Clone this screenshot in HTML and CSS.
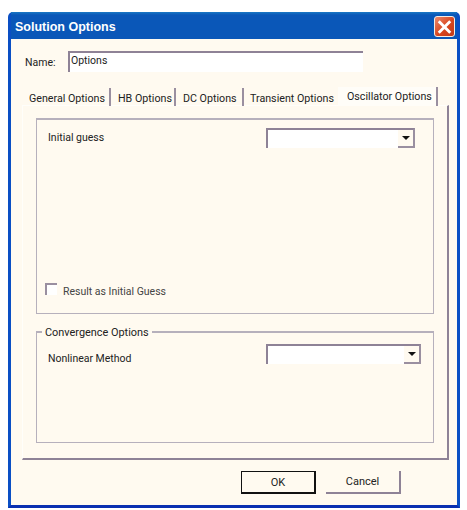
FILE: index.html
```html
<!DOCTYPE html>
<html lang="en">
  <head>
    <meta charset="UTF-8" />
    <title>Solution Options</title>
    <link rel="stylesheet" href="styles.css">
  </head>
  <body>
    <main class="window">
      <header class="titlebar">
        <h1>Solution Options</h1>
        <button class="close" aria-label="Close">
          <svg viewBox="0 0 20 20" width="20" height="20">
            <path d="M5 5 L15 15 M15 5 L5 15" stroke="#fff" stroke-width="3" stroke-linecap="square" fill="none" />
          </svg>
        </button>
      </header>
      <section class="client">
        <div class="name-row">
          <label>Name:</label>
          <div class="name-input">Options</div>
        </div>
        <nav class="tabs">
          <div class="tab tab-general">General Options</div>
          <div class="tab tab-hb">HB Options</div>
          <div class="tab tab-dc">DC Options</div>
          <div class="tab tab-transient">Transient Options</div>
          <div class="tab tab-active">Oscillator Options</div>
        </nav>
        <section class="pane">
          <div class="group group-guess">
            <div class="field-row">
              <span>Initial guess</span>
              <div class="combo combo-guess"><div class="combo-btn"><i class="arrow"></i></div></div>
            </div>
            <label class="check-row">
              <span class="check"></span>
              <span class="check-text">Result as Initial Guess</span>
            </label>
          </div>
          <fieldset class="group group-conv">
            <legend>Convergence Options</legend>
            <div class="field-row">
              <span>Nonlinear Method</span>
              <div class="combo combo-method"><div class="combo-btn"><i class="arrow"></i></div></div>
            </div>
          </fieldset>
        </section>
        <footer class="buttons">
          <button class="btn btn-default">OK</button>
          <button class="btn">Cancel</button>
        </footer>
      </section>
    </main>
  </body>
</html>
```

FILE: styles.css
```css
* {
  box-sizing: border-box;
  padding: 0;
  margin: 0;
  font-family: Roboto, "Liberation Sans", sans-serif;
}

body {
  background-color: #fff;
  padding: 12px 7px 2px 8px;
  font-size: 10.5px;
  color: #222;
}

.window {
  width: 452px;
  height: 496px;
  display: flex;
  flex-direction: column;
  border-radius: 5px 5px 0 0;
  background-color: #0a52bd;
  border: 3px solid #0a4fc4;
  border-top: none;
  border-bottom-color: #0a2fb0;
}

.titlebar {
  height: 27px;
  display: flex;
  align-items: center;
  justify-content: space-between;
  padding: 2px 2px 0 4px;
  background: linear-gradient(#1a78c4 0, #0a57b8 3px, #0a57b8 100%);
}

.titlebar h1 {
  font-family: "Liberation Sans", sans-serif;
  font-size: 12.5px;
  color: #fff;
}

.close {
  width: 21px;
  height: 21px;
  display: flex;
  align-items: center;
  justify-content: center;
  border: 1px solid #f4ece4;
  border-radius: 3px;
  background: linear-gradient(135deg, #ee8a6c, #d8461e 55%, #c23a18);
}

.client {
  flex: 1;
  background-color: #fffaf0;
  padding: 12px 11px 0 11px;
}

.name-row {
  display: flex;
  align-items: center;
  height: 21px;
}

.name-row label {
  flex: none;
  width: 46px;
  padding-left: 3px;
  margin-top: 1px;
}

.name-input {
  width: 295px;
  height: 21px;
  background-color: #fff;
  border-top: 2px solid #8e8296;
  border-left: 2px solid #8e8296;
  padding: 1px 0 0 1px;
  line-height: 14px;
}

.tabs {
  display: flex;
  height: 19px;
  margin-top: 15px;
  line-height: 21px;
  font-size: 10.7px;
}

.tab {
  border-right: 2px solid #9a8fa0;
  padding-left: 7px;
  white-space: nowrap;
  margin-top: 1px;
}

.tab-general { width: 89px; }
.tab-hb { width: 65px; }
.tab-dc { width: 68px; }
.tab-transient {
  width: 94px;
  padding-left: 6px;
  border-right: none;
}

.tab-active {
  width: 100px;
  margin-top: 0;
  padding-left: 9px;
  line-height: 19px;
  background-color: #fffdf8;
}

.pane {
  width: 427px;
  height: 355px;
  margin-top: -1px;
  border-right: 2px solid #8e8296;
  border-bottom: 2px solid #8e8296;
  border-left: 1px solid #fffefa;
  border-top: 1px solid #fffefa;
  padding: 12px 13px 0 13px;
}

.group {
  width: 398px;
  border: 1px solid #b6b0bc;
  border-top-width: 2px;
}

.group-guess {
  height: 196px;
  position: relative;
  padding: 8px 11px;
}

.group-conv {
  height: 119px;
  margin-top: 10px;
  padding: 5px 11px;
}

.group-conv legend {
  margin-left: -6px;
  padding: 2px 3px 0;
  line-height: 13px;
  font-size: 10.9px;
}

.field-row {
  display: flex;
  justify-content: space-between;
}

.field-row > span {
  margin-top: 3px;
}

.group-conv .field-row > span {
  margin-top: 8px;
}

.combo {
  height: 20px;
  display: flex;
  justify-content: flex-end;
  background-color: #fff;
  border-top: 2px solid #8e8296;
  border-left: 2px solid #8e8296;
  border-right: 2px solid #9a8fa0;
}

.combo-guess {
  width: 149px;
  margin-right: 7px;
}

.combo-method {
  width: 155px;
  margin-right: 1px;
}

.combo-btn {
  width: 15px;
  background-color: #fffaf0;
  border-bottom: 2px solid #9a8fa0;
  display: flex;
  align-items: center;
  justify-content: center;
}

.arrow {
  border-left: 4px solid transparent;
  border-right: 4px solid transparent;
  border-top: 4px solid #111;
}

.check-row {
  position: absolute;
  left: 8px;
  top: 163px;
  display: flex;
  gap: 6px;
  color: #444;
}

.check {
  width: 12px;
  height: 12px;
  background-color: #fff;
  border-top: 2px solid #9a8fa0;
  border-left: 2px solid #9a8fa0;
}

.check-text {
  margin-top: 2px;
}

.buttons {
  display: flex;
  gap: 10px;
  margin-top: 11px;
  padding-left: 219px;
}

.btn {
  width: 75px;
  height: 23px;
  font-size: 11px;
  color: #222;
  background-color: #fffaf0;
  border: none;
  border-right: 2px solid #8e8296;
  border-bottom: 2px solid #8e8296;
}

.btn-default {
  border: 1px solid #111;
  border-right-width: 2px;
  border-bottom-width: 2px;
}
```
